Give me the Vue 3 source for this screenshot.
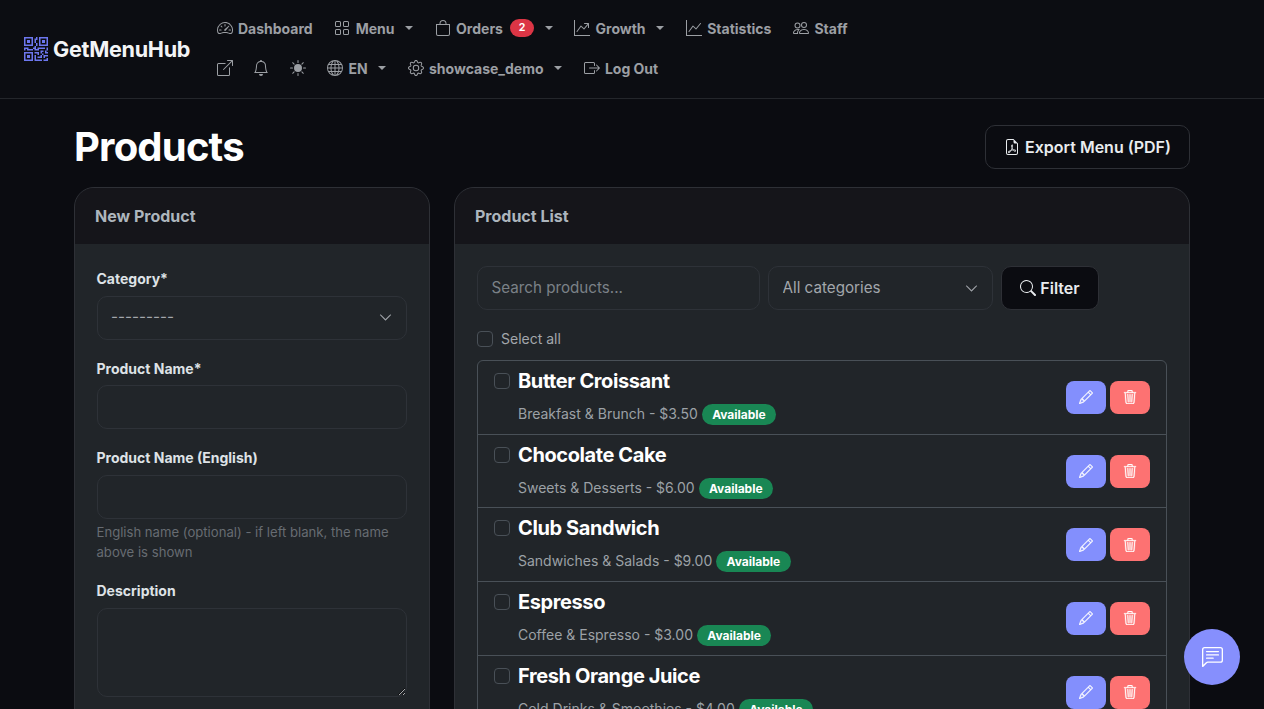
<script setup>
const icons = {
  gauge: ['M8 4a.5.5 0 0 1 .5.5V6a.5.5 0 0 1-1 0V4.5A.5.5 0 0 1 8 4M3.732 5.732a.5.5 0 0 1 .707 0l.915.914a.5.5 0 1 1-.708.708l-.914-.915a.5.5 0 0 1 0-.707M2 10a.5.5 0 0 1 .5-.5h1.586a.5.5 0 0 1 0 1H2.5A.5.5 0 0 1 2 10m9.5 0a.5.5 0 0 1 .5-.5h1.5a.5.5 0 0 1 0 1H12a.5.5 0 0 1-.5-.5m.754-4.246a.39.39 0 0 0-.527-.02L7.547 9.31a.91.91 0 1 0 1.302 1.258l3.434-4.297a.39.39 0 0 0-.029-.518z', 'M0 10a8 8 0 1 1 15.547 2.661c-.442 1.253-1.845 1.602-2.932 1.25C11.309 13.488 9.475 13 8 13c-1.474 0-3.31.488-4.615.911-1.087.352-2.49.003-2.932-1.25A8 8 0 0 1 0 10m8-7a7 7 0 0 0-6.603 9.329c.203.575.923.876 1.68.63C4.397 12.533 6.358 12 8 12s3.604.532 4.923.96c.757.245 1.477-.056 1.68-.631A7 7 0 0 0 8 3'],
  grid: ['M1 2.5A1.5 1.5 0 0 1 2.5 1h3A1.5 1.5 0 0 1 7 2.5v3A1.5 1.5 0 0 1 5.5 7h-3A1.5 1.5 0 0 1 1 5.5zM2.5 2a.5.5 0 0 0-.5.5v3a.5.5 0 0 0 .5.5h3a.5.5 0 0 0 .5-.5v-3a.5.5 0 0 0-.5-.5zm6.5.5A1.5 1.5 0 0 1 10.5 1h3A1.5 1.5 0 0 1 15 2.5v3A1.5 1.5 0 0 1 13.5 7h-3A1.5 1.5 0 0 1 9 5.5zm1.5-.5a.5.5 0 0 0-.5.5v3a.5.5 0 0 0 .5.5h3a.5.5 0 0 0 .5-.5v-3a.5.5 0 0 0-.5-.5zM1 10.5A1.5 1.5 0 0 1 2.5 9h3A1.5 1.5 0 0 1 7 10.5v3A1.5 1.5 0 0 1 5.5 15h-3A1.5 1.5 0 0 1 1 13.5zm1.5-.5a.5.5 0 0 0-.5.5v3a.5.5 0 0 0 .5.5h3a.5.5 0 0 0 .5-.5v-3a.5.5 0 0 0-.5-.5zm6.5.5A1.5 1.5 0 0 1 10.5 9h3a1.5 1.5 0 0 1 1.5 1.5v3a1.5 1.5 0 0 1-1.5 1.5h-3A1.5 1.5 0 0 1 9 13.5zm1.5-.5a.5.5 0 0 0-.5.5v3a.5.5 0 0 0 .5.5h3a.5.5 0 0 0 .5-.5v-3a.5.5 0 0 0-.5-.5z'],
  bag: ['M8 1a2.5 2.5 0 0 1 2.5 2.5V4h-5v-.5A2.5 2.5 0 0 1 8 1m3.5 3v-.5a3.5 3.5 0 1 0-7 0V4H1v10a2 2 0 0 0 2 2h10a2 2 0 0 0 2-2V4zM2 5h12v9a1 1 0 0 1-1 1H3a1 1 0 0 1-1-1z'],
  growth: ['M0 0h1v15h15v1H0zm10 3.5a.5.5 0 0 1 .5-.5h4a.5.5 0 0 1 .5.5v4a.5.5 0 0 1-1 0V4.9l-3.613 4.417a.5.5 0 0 1-.74.037L7.06 6.767l-3.656 5.027a.5.5 0 0 1-.808-.588l4-5.5a.5.5 0 0 1 .758-.06l2.609 2.61L13.445 4H10.5a.5.5 0 0 1-.5-.5'],
  graph: ['M0 0h1v15h15v1H0zm14.817 3.113a.5.5 0 0 1 .07.704l-4.5 5.5a.5.5 0 0 1-.74.037L7.06 6.767l-3.656 5.027a.5.5 0 0 1-.808-.588l4-5.5a.5.5 0 0 1 .758-.06l2.609 2.61 4.15-5.073a.5.5 0 0 1 .704-.07'],
  people: ['M15 14s1 0 1-1-1-4-5-4-5 3-5 4 1 1 1 1zm-7.978-1L7 12.996c.001-.264.167-1.03.76-1.72C8.312 10.629 9.282 10 11 10c1.717 0 2.687.63 3.24 1.276.593.69.758 1.457.76 1.72l-.008.002-.014.002zM11 7a2 2 0 1 0 0-4 2 2 0 0 0 0 4m3-2a3 3 0 1 1-6 0 3 3 0 0 1 6 0M6.936 9.28a6 6 0 0 0-1.23-.247A7 7 0 0 0 5 9c-4 0-5 3-5 4q0 1 1 1h4.216A2.24 2.24 0 0 1 5 13c0-1.01.377-2.042 1.09-2.904.243-.294.526-.569.846-.816M4.92 10A5.5 5.5 0 0 0 4 13H1c0-.26.164-1.03.76-1.724.545-.636 1.492-1.256 3.16-1.275ZM1.5 5.5a3 3 0 1 1 6 0 3 3 0 0 1-6 0m3-2a2 2 0 1 0 0 4 2 2 0 0 0 0-4'],
  external: ['M8.636 3.5a.5.5 0 0 0-.5-.5H1.5A1.5 1.5 0 0 0 0 4.5v10A1.5 1.5 0 0 0 1.5 16h10a1.5 1.5 0 0 0 1.5-1.5V7.864a.5.5 0 0 0-1 0V14.5a.5.5 0 0 1-.5.5h-10a.5.5 0 0 1-.5-.5v-10a.5.5 0 0 1 .5-.5h6.636a.5.5 0 0 0 .5-.5', 'M16 .5a.5.5 0 0 0-.5-.5h-5a.5.5 0 0 0 0 1h3.793L6.146 9.146a.5.5 0 1 0 .708.708L15 1.707V5.5a.5.5 0 0 0 1 0z'],
  bell: ['M8 16a2 2 0 0 0 2-2H6a2 2 0 0 0 2 2M8 1.918l-.797.161A4 4 0 0 0 4 6c0 .628-.134 2.197-.459 3.742-.16.767-.376 1.566-.663 2.258h10.244c-.287-.692-.502-1.49-.663-2.258C12.134 8.197 12 6.628 12 6a4 4 0 0 0-3.203-3.92zM14.22 12c.223.447.481.801.78 1H1c.299-.199.557-.553.78-1C2.68 10.2 3 6.88 3 6c0-2.42 1.72-4.44 4.005-4.901a1 1 0 1 1 1.99 0A5 5 0 0 1 13 6c0 .88.32 4.2 1.22 6'],
  sun: ['M8 12a4 4 0 1 0 0-8 4 4 0 0 0 0 8M8 0a.5.5 0 0 1 .5.5v2a.5.5 0 0 1-1 0v-2A.5.5 0 0 1 8 0m0 13a.5.5 0 0 1 .5.5v2a.5.5 0 0 1-1 0v-2A.5.5 0 0 1 8 13m8-5a.5.5 0 0 1-.5.5h-2a.5.5 0 0 1 0-1h2a.5.5 0 0 1 .5.5M3 8a.5.5 0 0 1-.5.5h-2a.5.5 0 0 1 0-1h2A.5.5 0 0 1 3 8m10.657-5.657a.5.5 0 0 1 0 .707l-1.414 1.415a.5.5 0 1 1-.707-.708l1.414-1.414a.5.5 0 0 1 .707 0m-9.193 9.193a.5.5 0 0 1 0 .707L3.05 13.657a.5.5 0 0 1-.707-.707l1.414-1.414a.5.5 0 0 1 .707 0m9.193 2.121a.5.5 0 0 1-.707 0l-1.414-1.414a.5.5 0 0 1 .707-.707l1.414 1.414a.5.5 0 0 1 0 .707M4.464 4.465a.5.5 0 0 1-.707 0L2.343 3.05a.5.5 0 1 1 .707-.707l1.414 1.414a.5.5 0 0 1 0 .708'],
  globe: ['M0 8a8 8 0 1 1 16 0A8 8 0 0 1 0 8m7.5-6.923c-.67.204-1.335.82-1.887 1.855A8 8 0 0 0 5.145 4H7.5zM4.09 4a9.3 9.3 0 0 1 .64-1.539 7 7 0 0 1 .597-.933A7.03 7.03 0 0 0 2.255 4zm-.582 3.5c.03-.877.138-1.718.312-2.5H1.674a7 7 0 0 0-.656 2.5zM4.847 5a12.5 12.5 0 0 0-.338 2.5H7.5V5zM8.5 5v2.5h2.99a12.5 12.5 0 0 0-.337-2.5zM4.51 8.5a12.5 12.5 0 0 0 .337 2.5H7.5V8.5zm3.99 0V11h2.653c.187-.765.306-1.608.338-2.5zM5.145 12q.208.58.468 1.068c.552 1.035 1.218 1.65 1.887 1.855V12zm.182 2.472a7 7 0 0 1-.597-.933A9.3 9.3 0 0 1 4.09 12H2.255a7 7 0 0 0 3.072 2.472M3.82 11a13.7 13.7 0 0 1-.312-2.5h-2.49c.062.89.291 1.733.656 2.5zm6.853 3.472A7 7 0 0 0 13.745 12H11.91a9.3 9.3 0 0 1-.64 1.539 7 7 0 0 1-.597.933M8.5 12v2.923c.67-.204 1.335-.82 1.887-1.855q.26-.487.468-1.068zm3.68-1h2.146c.365-.767.594-1.61.656-2.5h-2.49a13.7 13.7 0 0 1-.312 2.5m2.802-3.5a7 7 0 0 0-.656-2.5H12.18c.174.782.282 1.623.312 2.5zM11.27 2.461c.247.464.462.98.64 1.539h1.835a7 7 0 0 0-3.072-2.472c.218.284.418.598.597.933M10.855 4a8 8 0 0 0-.468-1.068C9.835 1.897 9.17 1.282 8.5 1.077V4z'],
  gear: ['M8 4.754a3.246 3.246 0 1 0 0 6.492 3.246 3.246 0 0 0 0-6.492M5.754 8a2.246 2.246 0 1 1 4.492 0 2.246 2.246 0 0 1-4.492 0', 'M9.796 1.343c-.527-1.79-3.065-1.79-3.592 0l-.094.319a.873.873 0 0 1-1.255.52l-.292-.16c-1.64-.892-3.433.902-2.54 2.541l.159.292a.873.873 0 0 1-.52 1.255l-.319.094c-1.79.527-1.79 3.065 0 3.592l.319.094a.873.873 0 0 1 .52 1.255l-.16.292c-.892 1.64.901 3.434 2.541 2.54l.292-.159a.873.873 0 0 1 1.255.52l.094.319c.527 1.79 3.065 1.79 3.592 0l.094-.319a.873.873 0 0 1 1.255-.52l.292.16c1.64.893 3.434-.902 2.54-2.541l-.159-.292a.873.873 0 0 1 .52-1.255l.319-.094c1.79-.527 1.79-3.065 0-3.592l-.319-.094a.873.873 0 0 1-.52-1.255l.16-.292c.893-1.64-.902-3.433-2.541-2.54l-.292.159a.873.873 0 0 1-1.255-.52zm-2.633.283c.246-.835 1.428-.835 1.674 0l.094.319a1.873 1.873 0 0 0 2.693 1.115l.291-.16c.764-.415 1.6.42 1.184 1.185l-.159.292a1.873 1.873 0 0 0 1.116 2.692l.318.094c.835.246.835 1.428 0 1.674l-.319.094a1.873 1.873 0 0 0-1.115 2.693l.16.291c.415.764-.42 1.6-1.185 1.184l-.291-.159a1.873 1.873 0 0 0-2.693 1.116l-.094.318c-.246.835-1.428.835-1.674 0l-.094-.319a1.873 1.873 0 0 0-2.692-1.115l-.292.16c-.764.415-1.6-.42-1.184-1.185l.159-.291A1.873 1.873 0 0 0 1.945 8.93l-.319-.094c-.835-.246-.835-1.428 0-1.674l.319-.094A1.873 1.873 0 0 0 3.06 4.377l-.16-.292c-.415-.764.42-1.6 1.185-1.184l.292.159a1.873 1.873 0 0 0 2.692-1.115z'],
  logout: ['M10 12.5a.5.5 0 0 1-.5.5h-8a.5.5 0 0 1-.5-.5v-9a.5.5 0 0 1 .5-.5h8a.5.5 0 0 1 .5.5v2a.5.5 0 0 0 1 0v-2A1.5 1.5 0 0 0 9.5 2h-8A1.5 1.5 0 0 0 0 3.5v9A1.5 1.5 0 0 0 1.5 14h8a1.5 1.5 0 0 0 1.5-1.5v-2a.5.5 0 0 0-1 0z', 'M15.854 8.354a.5.5 0 0 0 0-.708l-3-3a.5.5 0 0 0-.708.708L14.293 7.5H5.5a.5.5 0 0 0 0 1h8.793l-2.147 2.146a.5.5 0 0 0 .708.708z'],
  qr: ['M2 2h2v2H2z', 'M6 0v6H0V0zM5 1H1v4h4zM4 12H2v2h2z', 'M6 10v6H0v-6zm-5 1v4h4v-4zm11-9h2v2h-2z', 'M10 0v6h6V0zm5 1v4h-4V1zM8 1V0h1v2H8v2H7V1zm0 5V4h1v2zM6 8V7h1V6h1v2h1V7h5v1h-4v1H7V8zm0 0v1H2V8H1v1H0V7h3v1zm10 1h-1V7h1zm-1 0h-1v2h2v-1h-1zm-4 0h2v1h-1v1h-1zm2 3v-1h-1v1h-1v1H9v1h3v-2zm0 0h3v1h-2v1h-1zm-4-1v1h1v-2H7v1z', 'M7 12h1v3h4v1H7zm9 2v2h-3v-1h2v-1z'],
  pdf: ['M14 14V4.5L9.5 0H4a2 2 0 0 0-2 2v12a2 2 0 0 0 2 2h8a2 2 0 0 0 2-2M9.5 3A1.5 1.5 0 0 0 11 4.5h2V14a1 1 0 0 1-1 1H4a1 1 0 0 1-1-1V2a1 1 0 0 1 1-1h5.5z', 'M4.603 14.087a.8.8 0 0 1-.438-.42c-.195-.388-.13-.776.08-1.102.198-.307.526-.568.897-.787a7.7 7.7 0 0 1 1.482-.645 20 20 0 0 0 1.062-2.227 7.3 7.3 0 0 1-.43-1.295c-.086-.4-.119-.796-.046-1.136.075-.354.274-.672.65-.823.192-.077.4-.12.602-.077a.7.7 0 0 1 .477.365c.088.164.12.356.127.538.007.188-.012.396-.047.614-.084.51-.27 1.134-.52 1.794a11 11 0 0 0 .98 1.686 5.8 5.8 0 0 1 1.334.05c.364.066.734.195.96.465.12.144.193.32.2.518.007.192-.047.382-.138.563a1.04 1.04 0 0 1-.354.416.86.86 0 0 1-.51.138c-.331-.014-.654-.196-.933-.417a5.7 5.7 0 0 1-.911-.95 11.7 11.7 0 0 0-1.997.406 11.3 11.3 0 0 1-1.02 1.51c-.292.35-.609.656-.927.787a.8.8 0 0 1-.58.029m1.379-1.901q-.25.115-.459.238c-.328.194-.541.383-.647.547-.094.145-.096.25-.04.361q.016.032.026.044l.035-.012c.137-.056.355-.235.635-.572a8 8 0 0 0 .45-.606m1.64-1.33a13 13 0 0 1 1.01-.193 12 12 0 0 1-.51-.858 21 21 0 0 1-.5 1.05zm2.446.45q.226.245.435.41c.24.19.407.253.498.256a.1.1 0 0 0 .07-.015.3.3 0 0 0 .094-.125.44.44 0 0 0 .059-.2.1.1 0 0 0-.026-.063c-.052-.062-.2-.152-.518-.209a4 4 0 0 0-.612-.053zM8.078 7.8a7 7 0 0 0 .2-.828q.046-.282.038-.465a.6.6 0 0 0-.032-.198.5.5 0 0 0-.145.04c-.087.035-.158.106-.196.283-.04.192-.03.469.046.822q.036.167.09.346z'],
  pencil: ['M12.146.146a.5.5 0 0 1 .708 0l3 3a.5.5 0 0 1 0 .708l-10 10a.5.5 0 0 1-.168.11l-5 2a.5.5 0 0 1-.65-.65l2-5a.5.5 0 0 1 .11-.168zM11.207 2.5 13.5 4.793 14.793 3.5 12.5 1.207zm1.586 3L10.5 3.207 4 9.707V10h.5a.5.5 0 0 1 .5.5v.5h.5a.5.5 0 0 1 .5.5v.5h.293zm-9.761 5.175-.106.106-1.528 3.821 3.821-1.528.106-.106A.5.5 0 0 1 5 12.5V12h-.5a.5.5 0 0 1-.5-.5V11h-.5a.5.5 0 0 1-.468-.325'],
  trash: ['M6.5 1h3a.5.5 0 0 1 .5.5v1H6v-1a.5.5 0 0 1 .5-.5M11 2.5v-1A1.5 1.5 0 0 0 9.5 0h-3A1.5 1.5 0 0 0 5 1.5v1H1.5a.5.5 0 0 0 0 1h.538l.853 10.66A2 2 0 0 0 4.885 16h6.23a2 2 0 0 0 1.994-1.84l.853-10.66h.538a.5.5 0 0 0 0-1zm1.958 1-.846 10.58a1 1 0 0 1-.997.92h-6.23a1 1 0 0 1-.997-.92L3.042 3.5zm-7.487 1a.5.5 0 0 1 .528.47l.5 8.5a.5.5 0 0 1-.998.06L5 5.03a.5.5 0 0 1 .47-.53Zm5.058 0a.5.5 0 0 1 .47.53l-.5 8.5a.5.5 0 1 1-.998-.06l.5-8.5a.5.5 0 0 1 .528-.47M8 4.5a.5.5 0 0 1 .5.5v8.5a.5.5 0 0 1-1 0V5a.5.5 0 0 1 .5-.5'],
  chat: ['M14 1a1 1 0 0 1 1 1v8a1 1 0 0 1-1 1H4.414A2 2 0 0 0 3 11.586l-2 2V2a1 1 0 0 1 1-1zM2 0a2 2 0 0 0-2 2v12.793a.5.5 0 0 0 .854.353l2.853-2.853A1 1 0 0 1 4.414 12H14a2 2 0 0 0 2-2V2a2 2 0 0 0-2-2z', 'M3 3.5a.5.5 0 0 1 .5-.5h9a.5.5 0 0 1 0 1h-9a.5.5 0 0 1-.5-.5M3 6a.5.5 0 0 1 .5-.5h9a.5.5 0 0 1 0 1h-9A.5.5 0 0 1 3 6m0 2.5a.5.5 0 0 1 .5-.5h5a.5.5 0 0 1 0 1h-5a.5.5 0 0 1-.5-.5'],
  search: ['M11.742 10.344a6.5 6.5 0 1 0-1.397 1.398h-.001q.044.06.098.115l3.85 3.85a1 1 0 0 0 1.415-1.414l-3.85-3.85a1 1 0 0 0-.115-.1zM12 6.5a5.5 5.5 0 1 1-11 0 5.5 5.5 0 0 1 11 0'],
  chevron: ['M1.646 4.646a.5.5 0 0 1 .708 0L8 10.293l5.646-5.647a.5.5 0 0 1 .708.708l-6 6a.5.5 0 0 1-.708 0l-6-6a.5.5 0 0 1 0-.708'],
}

const navTop = [
  { icon: 'gauge', label: 'Dashboard' },
  { icon: 'grid', label: 'Menu', caret: true },
  { icon: 'bag', label: 'Orders', badge: 2, caret: true },
  { icon: 'growth', label: 'Growth', caret: true },
  { icon: 'graph', label: 'Statistics' },
  { icon: 'people', label: 'Staff' },
]
const navBottom = [
  { icon: 'external' },
  { icon: 'bell' },
  { icon: 'sun' },
  { icon: 'globe', label: 'EN', caret: true },
  { icon: 'gear', label: 'showcase_demo', caret: true },
  { icon: 'logout', label: 'Log Out' },
]
const products = [
  { name: 'Butter Croissant', meta: 'Breakfast & Brunch - $3.50' },
  { name: 'Chocolate Cake', meta: 'Sweets & Desserts - $6.00' },
  { name: 'Club Sandwich', meta: 'Sandwiches & Salads - $9.00' },
  { name: 'Espresso', meta: 'Coffee & Espresso - $3.00' },
  { name: 'Fresh Orange Juice', meta: 'Cold Drinks & Smoothies - $4.00' },
]
</script>

<template>
  <div class="page">
    <header class="navbar">
      <a class="brand">
        <svg class="bi brand-icon" viewBox="0 0 16 16" fill="currentColor"><path v-for="d in icons.qr" :key="d" :d="d" /></svg>
        <span>GetMenuHub</span>
      </a>
      <nav class="nav">
        <div v-for="(row, r) in [navTop, navBottom]" :key="r" class="nav-row">
          <a v-for="item in row" :key="item.icon" class="nav-link">
            <svg class="bi" viewBox="0 0 16 16" fill="currentColor"><path v-for="d in icons[item.icon]" :key="d" fill-rule="evenodd" :d="d" /></svg>
            <span v-if="item.label">{{ item.label }}</span>
            <span v-if="item.badge" class="nav-badge">{{ item.badge }}</span>
            <span v-if="item.caret" class="caret"></span>
          </a>
        </div>
      </nav>
    </header>

    <main class="container">
      <div class="title-row">
        <h1>Products</h1>
        <button class="btn btn-outline export">
          <svg class="bi" viewBox="0 0 16 16" fill="currentColor"><path v-for="d in icons.pdf" :key="d" :d="d" /></svg>
          Export Menu (PDF)
        </button>
      </div>

      <div class="columns">
        <section class="card card-left">
          <div class="card-header">New Product</div>
          <div class="card-body form-body">
            <div class="group">
              <label>Category*</label>
              <div class="select-wrap">
                <select class="control"><option>---------</option></select>
                <svg class="chevron" viewBox="0 0 16 16" fill="currentColor"><path v-for="d in icons.chevron" :key="d" :d="d" /></svg>
              </div>
            </div>
            <div class="group">
              <label>Product Name*</label>
              <input class="control" type="text" />
            </div>
            <div class="group">
              <label>Product Name (English)</label>
              <input class="control" type="text" />
              <div class="help">English name (optional) - if left blank, the name above is shown</div>
            </div>
            <div class="group">
              <label>Description</label>
              <textarea class="control area"></textarea>
            </div>
          </div>
        </section>

        <section class="card card-right">
          <div class="card-header">Product List</div>
          <div class="card-body list-body">
            <div class="filters">
              <input class="control search" type="text" placeholder="Search products..." />
              <div class="select-wrap cat">
                <select class="control"><option>All categories</option></select>
                <svg class="chevron" viewBox="0 0 16 16" fill="currentColor"><path v-for="d in icons.chevron" :key="d" :d="d" /></svg>
              </div>
              <button class="btn btn-outline filter">
                <svg class="bi" viewBox="0 0 16 16" fill="currentColor"><path v-for="d in icons.search" :key="d" :d="d" /></svg>
                Filter
              </button>
            </div>
            <label class="select-all"><span class="check"></span>Select all</label>
            <div class="list">
              <div v-for="p in products" :key="p.name" class="item">
                <span class="check item-check"></span>
                <div class="item-main">
                  <h5>{{ p.name }}</h5>
                  <div class="meta">{{ p.meta }} <span class="pill">Available</span></div>
                </div>
                <div class="actions">
                  <button class="act act-edit" aria-label="Edit">
                    <svg class="bi" viewBox="0 0 16 16" fill="currentColor"><path v-for="d in icons.pencil" :key="d" :d="d" /></svg>
                  </button>
                  <button class="act act-del" aria-label="Delete">
                    <svg class="bi" viewBox="0 0 16 16" fill="currentColor"><path v-for="d in icons.trash" :key="d" :d="d" /></svg>
                  </button>
                </div>
              </div>
            </div>
          </div>
        </section>
      </div>
    </main>

    <button class="chat" aria-label="Chat">
      <svg viewBox="0 0 16 16" fill="currentColor"><path v-for="d in icons.chat" :key="d" :d="d" /></svg>
    </button>
  </div>
</template>

<style scoped>
.page {
  height: 100vh;
  overflow: hidden;
  background: #0b0c11;
  color: #dee2e6;
  font-family: Inter, "Noto Sans", sans-serif;
  font-size: 14px;
  line-height: 1.5;
}
.bi {
  width: 16px;
  height: 16px;
  flex: none;
}
.navbar {
  display: flex;
  align-items: center;
  height: 99px;
  box-sizing: border-box;
  padding: 0 24px;
  border-bottom: 1px solid #24262b;
  background: #0c0d12;
}
.brand {
  display: flex;
  align-items: center;
  gap: 5px;
  color: #f3f4f6;
  font-size: 21.6px;
  font-weight: 700;
  letter-spacing: -0.3px;
}
.brand-icon {
  width: 24px;
  height: 24px;
  color: #6d77ef;
}
.nav {
  margin-left: 26.5px;
  margin-bottom: 2px;
  display: flex;
  flex-direction: column;
}
.nav-row {
  display: flex;
  align-items: center;
  gap: 21.6px;
  height: 40px;
}
.nav-row:last-child {
  gap: 21.4px;
}
.nav-link {
  display: flex;
  align-items: center;
  gap: 6px;
  color: #9c9fa4;
  font-weight: 700;
  font-size: 14px;
  white-space: nowrap;
}
.nav-link .bi {
  margin-right: -0.6px;
}
.nav-badge {
  background: #dc3545;
  color: #fff;
  font-size: 10.5px;
  font-weight: 700;
  line-height: 18px;
  width: 24px;
  text-align: center;
  border-radius: 9px;
  margin-left: 1px;
}
.caret {
  width: 0;
  height: 0;
  border-top: 4.2px solid currentColor;
  border-left: 4.2px solid transparent;
  border-right: 4.2px solid transparent;
  margin-left: 4.6px;
}
.container {
  width: 1116px;
  margin: 0 auto;
}
.title-row {
  display: flex;
  align-items: center;
  justify-content: space-between;
  height: 88px;
  padding-top: 8px;
  box-sizing: border-box;
}
h1 {
  margin: -1px 0 0;
  font-size: 40px;
  font-weight: 700;
  line-height: 1.2;
  color: #fff;
  letter-spacing: -0.8px;
}
.btn {
  display: flex;
  align-items: center;
  font-family: inherit;
  font-size: 16px;
  font-weight: 600;
  border-radius: 10px;
}
.btn-outline {
  background: #0b0c11;
  border: 1px solid #2e3036;
  color: #e9ecef;
}
.export {
  height: 44px;
  width: 205px;
  box-sizing: border-box;
  justify-content: center;
  gap: 5px;
}
.columns {
  display: grid;
  grid-template-columns: 356px 736px;
  gap: 24px;
  align-items: start;
}
.card {
  background: #212529;
  border: 1px solid #2e3036;
  border-radius: 20px;
  overflow: hidden;
}
.card-header {
  background: #15151a;
  color: #adb5bd;
  font-size: 16px;
  font-weight: 700;
  height: 56px;
  display: flex;
  align-items: center;
  padding: 0 20px;
  box-sizing: border-box;
}
.form-body {
  padding: 24.2px 22.5px 24px 21.5px;
}
.group {
  margin-bottom: 17.6px;
}
.group label {
  display: block;
  font-weight: 650;
  color: #dee2e6;
  margin-bottom: 6.8px;
  line-height: 21px;
}
.control {
  display: block;
  width: 100%;
  height: 44px;
  box-sizing: border-box;
  background: #212529;
  border: 1px solid #2e3238;
  border-radius: 10px;
  padding: 0 14px 2px 13.5px;
  color: #a3a7ac;
  font-family: inherit;
  font-size: 15.2px;
  outline: none;
  appearance: none;
}
.control::placeholder {
  color: #7b8187;
  opacity: 1;
}
.area {
  height: 89px;
  resize: vertical;
  padding: 8px 14px;
}
.select-wrap {
  position: relative;
}
.chevron {
  position: absolute;
  right: 15px;
  top: 50%;
  width: 13px;
  height: 13px;
  margin-top: -6.5px;
  color: #a3a7ac;
  stroke: currentColor;
  stroke-width: 0.5;
}
.help {
  margin-top: 3px;
  padding-bottom: 1.1px;
  font-size: 13.125px;
  line-height: 20px;
  color: #676c72;
}
.list-body {
  padding: 22px 22px;
}
.filters {
  display: flex;
  gap: 8px;
}
.search {
  width: 283px;
}
.cat {
  width: 225px;
}
.filter {
  width: 98px;
  height: 44px;
  box-sizing: border-box;
  justify-content: center;
  gap: 4px;
  color: #e9ecef;
}
.select-all {
  display: flex;
  align-items: center;
  gap: 8px;
  height: 21px;
  margin: 18px 0 11.2px;
  color: #a3a7ac;
  font-size: 14px;
}
.check {
  width: 16px;
  height: 16px;
  box-sizing: border-box;
  border: 1px solid #495057;
  border-radius: 4px;
  flex: none;
}
.list {
  border: 1px solid #495057;
  border-radius: 6px;
}
.item {
  display: flex;
  align-items: center;
  padding: 8px 16px;
  height: 73.6px;
  box-sizing: border-box;
  border-bottom: 1px solid #495057;
}
.item:last-child {
  border-bottom: 0;
}
.item-check {
  align-self: flex-start;
  margin: 4px 8px 0 0;
}
.item-main {
  flex: 1;
  min-width: 0;
}
h5 {
  margin: 0 0 8px;
  font-size: 20px;
  font-weight: 700;
  line-height: 24px;
  color: #fff;
  letter-spacing: -0.4px;
}
.meta {
  color: #9ca1a6;
  font-size: 14px;
  line-height: 25px;
}
.pill {
  display: inline-block;
  background: #198754;
  color: #fff;
  font-size: 12px;
  font-weight: 700;
  line-height: 21px;
  padding: 0 10.4px;
  border-radius: 11px;
  margin-left: 0;
  vertical-align: 0;
}
.actions {
  display: flex;
  gap: 4px;
}
.act {
  width: 40px;
  height: 33px;
  border: 0;
  border-radius: 8px;
  display: flex;
  align-items: center;
  justify-content: center;
  color: #fff;
  padding: 0;
}
.act .bi {
  width: 14px;
  height: 14px;
  stroke: currentColor;
  stroke-width: 0.35;
}
.act-edit {
  background: #838ffd;
}
.act-del {
  background: #fd7272;
}
.chat {
  position: fixed;
  right: 24px;
  bottom: 24px;
  width: 56px;
  height: 56px;
  border-radius: 50%;
  border: 0;
  background: #868ffd;
  color: #fff;
  display: flex;
  align-items: center;
  justify-content: center;
  padding: 0;
}
.chat svg {
  width: 21px;
  height: 21px;
}
</style>
